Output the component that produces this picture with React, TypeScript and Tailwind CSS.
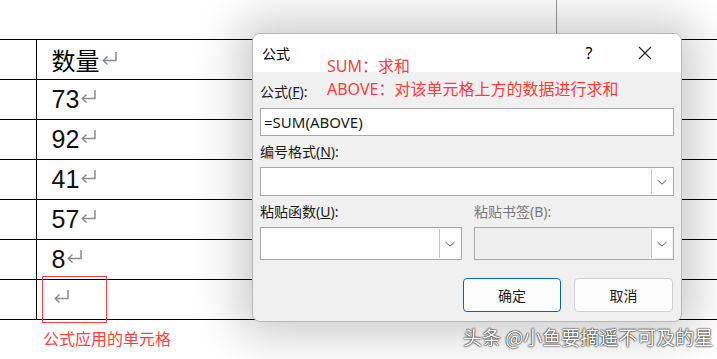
import React from 'react';

const rows = ['73', '92', '41', '57', '8', ''];

// Word paragraph mark
const Mark = () => (
    <svg width="18" height="14" viewBox="0 0 18 14" className="inline-block ml-[1px] align-[5px]" fill="none">
        <path d="M15 1V9.5H2.5" stroke="#8c8c8c" strokeWidth="1.5" />
        <path d="M6.5 5.5L2.4 9.5L6.5 13.5" stroke="#8c8c8c" strokeWidth="1.5" />
    </svg>
);

const Chevron = () => (
    <svg width="12" height="8" viewBox="0 0 12 8" fill="none">
        <path d="M1.5 2L6 6.2L10.5 2" stroke="#555" strokeWidth="1" />
    </svg>
);

const SelectBox: React.FC<{ disabled?: boolean; className?: string }> = ({ disabled, className }) => (
    <div className={`flex border border-[#a8a8a8] ${disabled ? 'bg-[#efefef]' : 'bg-white'} ${className ?? ''}`}>
        <div className="flex-1" />
        <div className="w-[21px] m-px flex items-center justify-center border-l border-[#c8c8c8] bg-white">
            <Chevron />
        </div>
    </div>
);

const App: React.FC = () => {
    return (
        <div
            className="relative w-[717px] h-[359px] overflow-hidden bg-white"
            style={{ fontFamily: '"Noto Sans", "Noto Sans CJK SC", sans-serif' }}
        >
            {/* page behind */}
            <div className="absolute left-[556px] top-0 h-[34px] w-px bg-[#9a9a9a]" />
            <div className="pt-[39px]">
                <table className="w-full border-collapse">
                    <tbody>
                        <tr className="border-y border-black h-[40px]">
                            <td className="w-[36px] border-r border-black" />
                            <td className="pl-[15px] text-[24px] leading-none text-black" style={{ fontFamily: '"Noto Sans CJK SC", sans-serif' }}>
                                数量<Mark />
                            </td>
                        </tr>
                        {rows.map((r, i) => (
                            <tr key={i} className="border-b border-black h-[40px]">
                                <td className="w-[36px] border-r border-black" />
                                <td className="pl-[15px] text-[25px] leading-none text-[#111]" style={{ fontFamily: '"Liberation Sans", sans-serif' }}>
                                    {r}
                                    <Mark />
                                </td>
                            </tr>
                        ))}
                    </tbody>
                </table>
            </div>
            <div className="absolute left-[42px] top-[276px] w-[65px] h-[47px] border border-[#ff4040]" />
            <div className="absolute left-[43px] top-[330px] text-[16px] text-[#ff4040] leading-none" style={{ fontFamily: '"Noto Sans CJK SC", sans-serif' }}>
                公式应用的单元格
            </div>

            {/* dialog */}
            <div className="absolute left-[252px] top-[33px] w-[430px] h-[289px] rounded-[8px] border border-[#b8b8b8] bg-[#f0f0f0] overflow-hidden shadow-[0_0_45px_14px_rgba(0,0,0,0.2)]">
                <div className="h-[38px] bg-white flex items-center pl-[9px] text-[14px] text-black">
                    <span className="flex-1">公式</span>
                    <span className="w-[56px] text-center text-[16px]">?</span>
                    <span className="w-[56px] flex justify-center mr-[8px]">
                        <svg width="14" height="14" viewBox="0 0 14 14">
                            <path d="M1 1L13 13M13 1L1 13" stroke="#222" strokeWidth="1.1" />
                        </svg>
                    </span>
                </div>
                <div className="px-[7px] text-[14px] text-[#1a1a1a]">
                    <div className="h-[36px] pt-[9px]">公式(<span className="underline">F</span>):</div>
                    <div className="h-[28px] bg-white border border-[#a8a8a8] flex items-center pl-[3px] text-[15px]">
                        =SUM(ABOVE)
                    </div>
                    <div className="h-[31px] pt-[5px]">编号格式(<span className="underline">N</span>):</div>
                    <SelectBox className="h-[29px]" />
                    <div className="flex gap-[12px]">
                        <div className="w-[202px]">
                            <div className="h-[31px] pt-[5px]">粘贴函数(<span className="underline">U</span>):</div>
                            <SelectBox className="h-[33px]" />
                        </div>
                        <div className="flex-1">
                            <div className="h-[31px] pt-[5px] text-[#7a7a7a]">粘贴书签(B):</div>
                            <SelectBox disabled className="h-[33px]" />
                        </div>
                    </div>
                    <div className="flex justify-end gap-[13px] mt-[18px] mr-[1px]">
                        <button className="w-[98px] h-[34px] rounded-[4px] border border-[#0067c0] bg-[#fdfdfd] text-[14px]">确定</button>
                        <button className="w-[99px] h-[34px] rounded-[4px] border border-[#d0d0d0] bg-[#fdfdfd] text-[14px]">取消</button>
                    </div>
                </div>
                <div className="absolute left-[74px] top-[21px] text-[16px] leading-[23px] text-[#ff3b3b]">
                    <div>SUM：求和</div>
                    <div>ABOVE：对该单元格上方的数据进行求和</div>
                </div>
            </div>

            <div
                className="absolute left-[463px] top-[327px] text-[19px] text-white leading-none"
                style={{ fontFamily: '"Noto Sans CJK SC", sans-serif', textShadow: '0 0 2px #000, 0 0 1px #000' }}
            >
                头条 @小鱼要摘遥不可及的星
            </div>
        </div>
    );
};

export default App;
